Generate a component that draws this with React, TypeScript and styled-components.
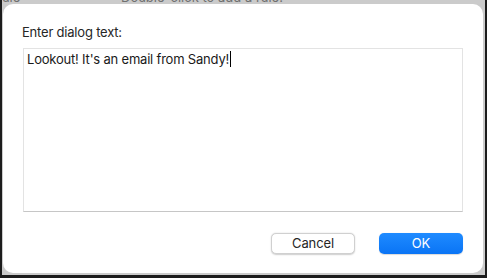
import React from "react";
import styled, { createGlobalStyle } from "styled-components";

const Global = createGlobalStyle`
  html, body { margin: 0; padding: 0; background: #c9c9c9; }
  body { font-family: Inter, "Noto Sans", "Liberation Sans", sans-serif; -webkit-font-smoothing: antialiased; }
`;

const Frame = styled.div`
  width: 487px;
  height: 278px;
  box-sizing: border-box;
  background: #cbcbcb;
  border-left: 2px solid #1c1c1c;
  border-right: 2px solid #1c1c1c;
  border-bottom: 3px solid #1c1c1c;
  padding: 0 2px 2px 1px;
  display: flex;
  flex-direction: column;
  overflow: hidden;
`;

const Backdrop = styled.div`
  height: 4px;
  flex: none;
  overflow: hidden;
  position: relative;
  color: #707070;
  font-size: 13px;
  line-height: 16px;
  white-space: nowrap;
`;

const BackdropText = styled.span<{ $left: number }>`
  position: absolute;
  top: -11px;
  left: ${(p) => p.$left}px;
`;

const Dialog = styled.div`
  flex: 1;
  background: #ffffff;
  border-radius: 10px;
  padding: 20px 20px 19px 19px;
  display: flex;
  flex-direction: column;
  box-sizing: border-box;
  letter-spacing: -0.2px;
`;

const Label = styled.div`
  font-size: 13px;
  line-height: 16px;
  color: #262626;
  margin-bottom: 8px;
`;

const TextBox = styled.div`
  height: 164px;
  box-sizing: border-box;
  border: 1px solid #e3e3e3;
  border-bottom-color: #c6c6c6;
  margin-left: 1px;
  padding: 2px 3px 3px 3px;
  font-size: 13px;
  line-height: 16px;
  color: #1a1a1a;
`;

const Caret = styled.span`
  display: inline-block;
  width: 1px;
  height: 16px;
  background: #000;
  vertical-align: -3px;
  margin-left: 1px;
`;

const Buttons = styled.div`
  margin-top: 21px;
  display: flex;
  justify-content: flex-end;
  gap: 24px;
`;

const Button = styled.button<{ $primary?: boolean }>`
  width: 84px;
  height: 21px;
  border-radius: 5px;
  font-family: inherit;
  font-size: 13px;
  letter-spacing: -0.1px;
  line-height: 19px;
  padding: 0;
  border: ${(p) => (p.$primary ? "none" : "0.5px solid #d0d0d0")};
  background: ${(p) =>
    p.$primary ? "linear-gradient(#1f8bff, #0a74f5)" : "#ffffff"};
  color: ${(p) => (p.$primary ? "#ffffff" : "#262626")};
  box-shadow: ${(p) =>
    p.$primary ? "0 0.5px 1px rgba(0,0,0,0.15)" : "0 0.5px 1.5px rgba(0,0,0,0.2)"};
`;

export default function App() {
  return (
    <>
      <Global />
      <Frame>
        <Backdrop>
          <BackdropText $left={-6}>rule</BackdropText>
          <BackdropText $left={118}>Double-click to add a rule.</BackdropText>
        </Backdrop>
        <Dialog>
          <Label>Enter dialog text:</Label>
          <TextBox>
            Lookout! It's an email from Sandy!
            <Caret />
          </TextBox>
          <Buttons>
            <Button>Cancel</Button>
            <Button $primary>OK</Button>
          </Buttons>
        </Dialog>
      </Frame>
    </>
  );
}
